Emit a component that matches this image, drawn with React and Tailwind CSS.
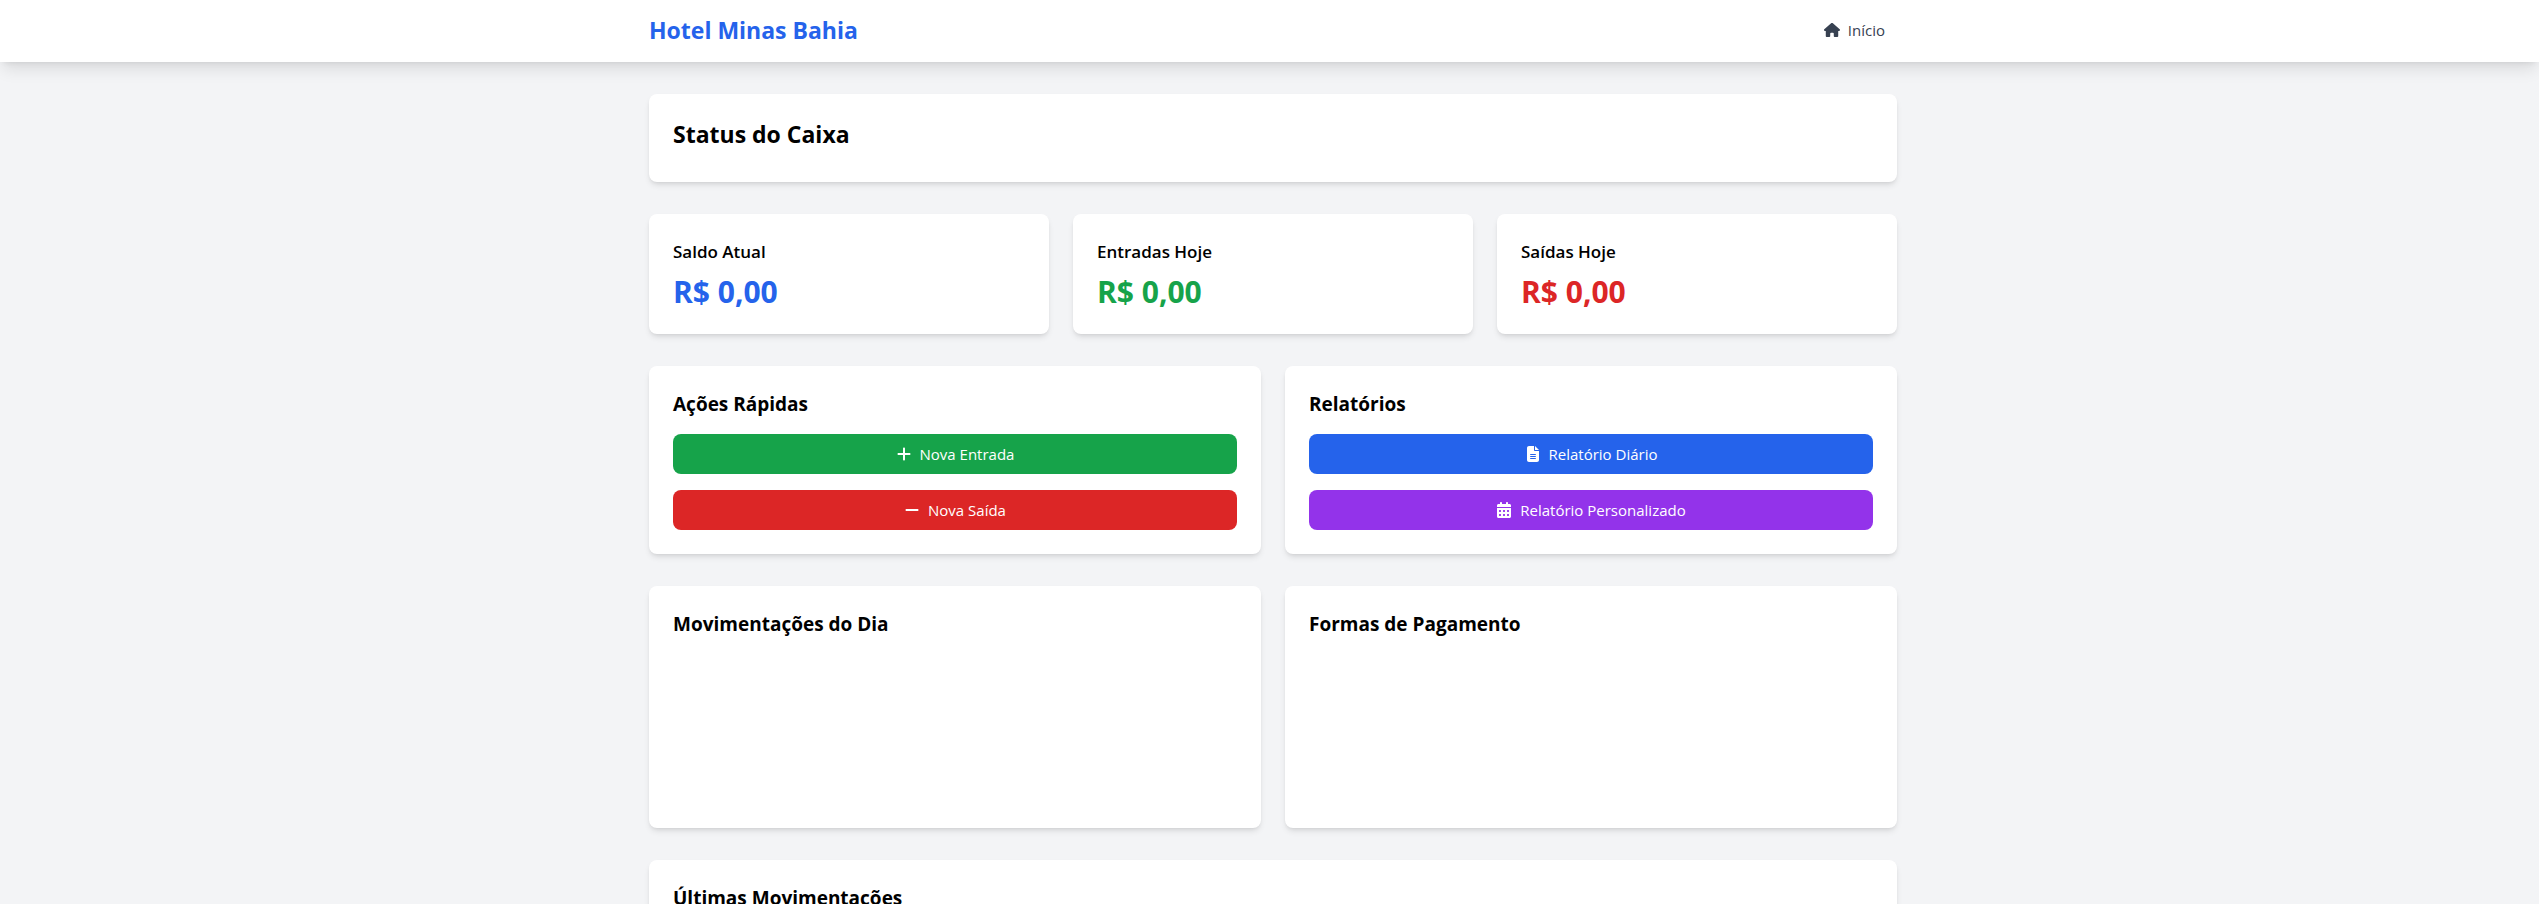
import { FaHouse, FaPlus, FaMinus, FaFileLines, FaCalendarDays } from "react-icons/fa6";

const stats = [
  { label: "Saldo Atual", value: "R$ 0,00", color: "text-[#2563eb]" },
  { label: "Entradas Hoje", value: "R$ 0,00", color: "text-[#16a34a]" },
  { label: "Saídas Hoje", value: "R$ 0,00", color: "text-[#dc2626]" },
];

const card = "rounded-lg bg-white p-6 shadow-md";
const cardTitle = "mb-4 text-[19px] leading-7 font-bold";

function ActionButton({ icon: Icon, color, children }) {
  return (
    <button
      type="button"
      className={`flex w-full items-center justify-center gap-2 rounded-lg px-4 py-2 text-white ${color}`}
    >
      <Icon className="h-4 w-auto" aria-hidden="true" />
      {children}
    </button>
  );
}

export default function App() {
  return (
    <div className="min-h-screen bg-[#f3f4f6] font-['Open_Sans','Noto_Sans',sans-serif] text-[15px] leading-6 text-black">
      <nav className="bg-white pl-[7px] shadow-lg">
        <div className="mx-auto flex max-w-7xl items-center justify-between px-4 pt-[14px] pb-4">
          <a href="#" className="text-[23px] leading-8 font-bold text-[#2563eb]">Hotel Minas Bahia</a>
          <a href="#" className="flex items-center gap-2 px-3 text-[#374151]">
            <FaHouse className="h-4 w-auto" aria-hidden="true" />
            Início
          </a>
        </div>
      </nav>
      <main className="pl-[7px]">
        <div className="mx-auto flex max-w-7xl flex-col gap-8 px-4 py-8">
          <section className={card}>
            <h2 className="mb-2 text-[23px] leading-8 font-bold">Status do Caixa</h2>
          </section>
          <div className="grid grid-cols-3 gap-6">
            {stats.map((s) => (
              <section key={s.label} className={card}>
                <h3 className="mb-2 text-[17px] leading-7 font-semibold">{s.label}</h3>
                <p className={`text-3xl font-bold ${s.color}`}>{s.value}</p>
              </section>
            ))}
          </div>
          <div className="grid grid-cols-2 gap-6">
            <section className={card}>
              <h3 className={cardTitle}>Ações Rápidas</h3>
              <div className="space-y-4">
                <ActionButton icon={FaPlus} color="bg-[#16a34a]">Nova Entrada</ActionButton>
                <ActionButton icon={FaMinus} color="bg-[#dc2626]">Nova Saída</ActionButton>
              </div>
            </section>
            <section className={card}>
              <h3 className={cardTitle}>Relatórios</h3>
              <div className="space-y-4">
                <ActionButton icon={FaFileLines} color="bg-[#2563eb]">Relatório Diário</ActionButton>
                <ActionButton icon={FaCalendarDays} color="bg-[#9333ea]">Relatório Personalizado</ActionButton>
              </div>
            </section>
          </div>
          <div className="grid grid-cols-2 gap-6">
            <section className={card}>
              <h3 className={cardTitle}>Movimentações do Dia</h3>
              <div className="h-[150px]" />
            </section>
            <section className={card}>
              <h3 className={cardTitle}>Formas de Pagamento</h3>
              <div className="h-[150px]" />
            </section>
          </div>
          <section className={card}>
            <h3 className={cardTitle}>Últimas Movimentações</h3>
          </section>
        </div>
      </main>
    </div>
  );
}
